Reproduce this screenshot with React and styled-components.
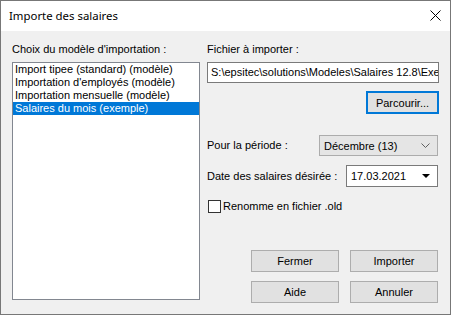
import React from 'react'
import styled, { createGlobalStyle } from 'styled-components'

const GlobalStyle = createGlobalStyle`
  html, body {
    margin: 0;
    padding: 0;
    background: #ffffff;
  }
`;

const Window = styled.div`
  width: 451px;
  height: 315px;
  box-sizing: border-box;
  border: 1px solid #777777;
  background: #f0f0f0;
  display: flex;
  flex-direction: column;
  font-family: "Liberation Sans", Arial, sans-serif;
  font-size: 11px;
  color: #000000;
  overflow: hidden;
`;

const TitleBar = styled.div`
  height: 30px;
  background: #ffffff;
  display: flex;
  align-items: center;
  justify-content: space-between;
  padding: 0 9px 0 8px;
`;

const TitleText = styled.span`
  font-family: "Noto Sans", "Open Sans", sans-serif;
  font-size: 11.4px;
  color: #000000;
  margin-top: -1px;
`;

const CloseButton = styled.div`
  width: 12px;
  height: 12px;
  display: grid;
  place-items: center;
  margin-top: -1px;
`;

const Body = styled.div`
  flex: 1;
  display: grid;
  grid-template-columns: 188px 232px;
  column-gap: 7px;
  padding: 12px 0 0 11px;
`;

const Column = styled.div`
  display: flex;
  flex-direction: column;
`;

const Label = styled.span`
  height: 13px;
  line-height: 13px;
  white-space: nowrap;
`;

const ListBox = styled.div`
  margin-top: 6px;
  height: 238px;
  box-sizing: border-box;
  border: 1px solid #828790;
  background: #ffffff;
  display: flex;
  flex-direction: column;
`;

const ListItem = styled.div`
  height: 13px;
  line-height: 13px;
  padding-left: 2px;
  white-space: nowrap;
  background: ${props => props.selected ? '#0078d7' : 'transparent'};
  color: ${props => props.selected ? '#ffffff' : '#000000'};
`;

const TextField = styled.div`
  margin-top: 6px;
  height: 21px;
  box-sizing: border-box;
  border: 1px solid #7a7a7a;
  background: #ffffff;
  padding: 0 3px;
  line-height: 19px;
  white-space: nowrap;
  overflow: hidden;
`;

const BrowseRow = styled.div`
  display: flex;
  justify-content: flex-end;
  margin-top: 8px;
`;

const Button = styled.div`
  width: ${props => props.width || 88}px;
  height: ${props => props.height || 22}px;
  box-sizing: border-box;
  border: ${props => props.focused ? '2px solid #0078d7' : '1px solid #adadad'};
  background: #e1e1e1;
  display: grid;
  place-items: center;
  white-space: nowrap;
`;

const FieldRow = styled.div`
  display: flex;
  align-items: center;
  justify-content: space-between;
  margin-top: ${props => props.gap}px;
  padding-right: 1px;
`;

const Combo = styled.div`
  width: ${props => props.width}px;
  height: ${props => props.height}px;
  box-sizing: border-box;
  border: 1px solid ${props => props.flat ? '#acacac' : '#7a7a7a'};
  background: ${props => props.flat ? '#e5e5e5' : '#ffffff'};
  display: flex;
  align-items: center;
  justify-content: space-between;
  padding: 0 7px 0 4px;
`;

const CheckRow = styled.div`
  display: flex;
  align-items: center;
  margin-top: 13px;
  padding-left: 1px;
  gap: 2px;
`;

const CheckBox = styled.div`
  width: 13px;
  height: 13px;
  box-sizing: border-box;
  border: 1px solid #333333;
  background: #ffffff;
`;

const ButtonGrid = styled.div`
  margin-top: auto;
  margin-bottom: 11px;
  align-self: flex-end;
  margin-right: 1px;
  display: grid;
  grid-template-columns: 88px 88px;
  column-gap: 11px;
  row-gap: 9px;
`;

const items = [
  'Import tipee (standard) (modèle)',
  "Importation d'employés (modèle)",
  'Importation mensuelle (modèle)',
  'Salaires du mois (exemple)',
]

export default function App() {
  return (
    <>
      <GlobalStyle />
      <Window>
        <TitleBar>
          <TitleText>Importe des salaires</TitleText>
          <CloseButton>
            <svg width="11" height="11" viewBox="0 0 11 11">
              <path d="M0.5 0.5 L10.5 10.5 M10.5 0.5 L0.5 10.5" stroke="#000" strokeWidth="1" fill="none" />
            </svg>
          </CloseButton>
        </TitleBar>
        <Body>
          <Column>
            <Label>Choix du modèle d'importation :</Label>
            <ListBox>
              {items.map((item, idx) => (
                <ListItem key={item} selected={idx === 3}>{item}</ListItem>
              ))}
            </ListBox>
          </Column>
          <Column>
            <Label>Fichier à importer :</Label>
            <TextField>S:\epsitec\solutions\Modeles\Salaires 12.8\Exe</TextField>
            <BrowseRow>
              <Button focused width={73} height={23}>Parcourir...</Button>
            </BrowseRow>
            <FieldRow gap={21}>
              <Label>Pour la période :</Label>
              <Combo flat width={119} height={21}>
                <span>Décembre (13)</span>
                <svg width="9" height="5" viewBox="0 0 9 5">
                  <path d="M0.5 0.5 L4.5 4.5 L8.5 0.5" stroke="#606060" strokeWidth="1" fill="none" />
                </svg>
              </Combo>
            </FieldRow>
            <FieldRow gap={9}>
              <Label>Date des salaires désirée :</Label>
              <Combo width={92} height={22}>
                <span>17.03.2021</span>
                <svg width="8" height="4" viewBox="0 0 8 4">
                  <path d="M0 0 L8 0 L4 4 Z" fill="#000" />
                </svg>
              </Combo>
            </FieldRow>
            <CheckRow>
              <CheckBox />
              <Label>Renomme en fichier .old</Label>
            </CheckRow>
            <ButtonGrid>
              <Button>Fermer</Button>
              <Button>Importer</Button>
              <Button>Aide</Button>
              <Button>Annuler</Button>
            </ButtonGrid>
          </Column>
        </Body>
      </Window>
    </>
  )
}
